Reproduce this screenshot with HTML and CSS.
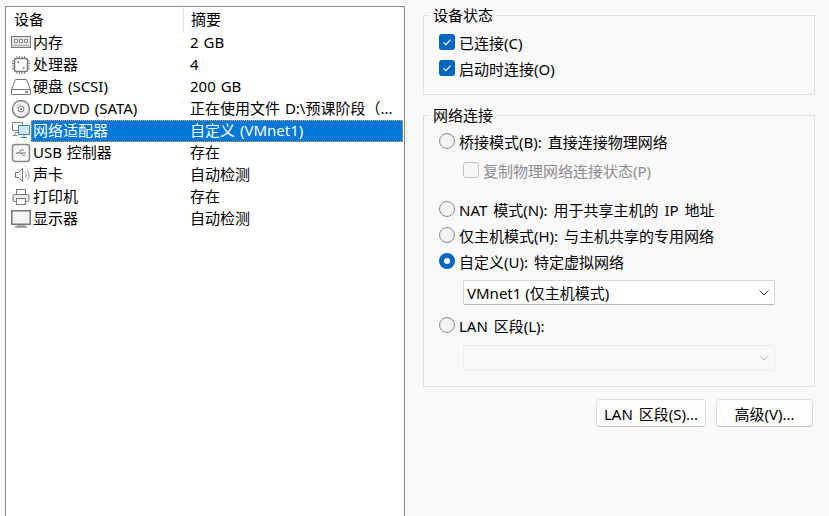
FILE: index.html
```html
<!DOCTYPE html>
<html lang="zh-CN">
<head>
    <meta charset="UTF-8">
    <title>网络适配器</title>
    <link rel="stylesheet" href="styles.css">
</head>
<body>
    <div class="device-list">
        <div class="list-head">
            <div class="head-name">设备</div>
            <div class="head-value">摘要</div>
        </div>
        <div class="row">
            <svg class="icon" viewBox="0 0 20 20"><rect x="0.500" y="3.500" width="19" height="11" fill="#e4e4e4" stroke="#777"/><path d="M3.500 6.500h3v3h-3zM8.500 6.500h3v3h-3zM13.500 6.500h3v3h-3z" fill="#fff" stroke="#888"/><path d="M2 12.500h16" stroke="#aaa"/></svg>
            <div class="label"><span class="name">内存</span><span>2 GB</span></div>
        </div>
        <div class="row">
            <svg class="icon" viewBox="0 0 20 20"><rect x="3.500" y="3.500" width="13" height="13" rx="1.500" fill="#fff" stroke="#777" stroke-width="1.500"/><path d="M6 1v2M8.500 1v2M11 1v2M13.500 1v2M6 17v2M8.500 17v2M11 17v2M13.500 17v2M1 6h2M1 8.500h2M1 11h2M1 13.500h2M17 6h2M17 8.500h2M17 11h2M17 13.500h2" stroke="#888"/><path d="M6.500 6.500h1.500v1.500H6.500zM12 12h1.500v1.500H12z" fill="#666"/></svg>
            <div class="label"><span class="name">处理器</span><span>4</span></div>
        </div>
        <div class="row">
            <svg class="icon" viewBox="0 0 20 20"><path d="M4.500 2.500h11l4 10v5h-19v-5z" fill="#fff" stroke="#777"/><path d="M0.500 12.500h19" stroke="#777"/><path d="M14 15h3" stroke="#666" stroke-width="1.500"/></svg>
            <div class="label"><span class="name">硬盘 (SCSI)</span><span>200 GB</span></div>
        </div>
        <div class="row">
            <svg class="icon" viewBox="0 0 20 20"><circle cx="10" cy="10" r="8.500" fill="#f4f4f4" stroke="#777" stroke-width="1.300"/><circle cx="10" cy="10" r="3" fill="#fff" stroke="#777"/><circle cx="10" cy="10" r="1" fill="#777"/><path d="M5 9a5 5 0 0 1 4-4" fill="none" stroke="#bbb"/></svg>
            <div class="label"><span class="name">CD/DVD (SATA)</span><span>正在使用文件 D:\预课阶段（...</span></div>
        </div>
        <div class="row">
            <svg class="icon" viewBox="0 0 20 20"><rect x="1.500" y="1.500" width="10" height="8" fill="#fff" stroke="#888"/><path d="M4 11.500h5M1.500 14.500h5M4 12v2" stroke="#888"/><rect x="7.500" y="4.500" width="11" height="9" fill="#cfe6f7" stroke="#3f86bd"/><path d="M10 16.500h6M13 14v2" stroke="#3f86bd"/></svg>
            <div class="label selected"><span class="name">网络适配器</span><span>自定义 (VMnet1)</span></div>
        </div>
        <div class="row">
            <svg class="icon" viewBox="0 0 20 20"><rect x="1.500" y="1.500" width="17" height="17" rx="3" fill="#f6f6f6" stroke="#888" stroke-width="1.500"/><path d="M5 10h10M7.500 10l2.500-3h3M10 10l2 2.500h2" fill="none" stroke="#777"/></svg>
            <div class="label"><span class="name">USB 控制器</span><span>存在</span></div>
        </div>
        <div class="row">
            <svg class="icon" viewBox="0 0 20 20"><path d="M4.500 7.500h3l4-4v13l-4-4h-3z" fill="#f2f2f2" stroke="#777"/><path d="M14 7a4 4 0 0 1 0 6M16 5a7 7 0 0 1 0 10" fill="none" stroke="#999"/></svg>
            <div class="label"><span class="name">声卡</span><span>自动检测</span></div>
        </div>
        <div class="row">
            <svg class="icon" viewBox="0 0 20 20"><path d="M5.500 7.500v-5h9v5" fill="#fff" stroke="#777"/><rect x="2" y="7.500" width="16" height="7" rx="1.500" fill="#eee" stroke="#777"/><rect x="5.500" y="11.500" width="9" height="6" fill="#fff" stroke="#777"/></svg>
            <div class="label"><span class="name">打印机</span><span>存在</span></div>
        </div>
        <div class="row">
            <svg class="icon" viewBox="0 0 20 20"><rect x="0.750" y="1.750" width="18.500" height="13.500" fill="#f4f4f4" stroke="#777" stroke-width="1.500"/><path d="M6 16h8v1.500H6z" fill="#aaa"/><path d="M4 18h12" stroke="#888" stroke-width="1.500"/></svg>
            <div class="label"><span class="name">显示器</span><span>自动检测</span></div>
        </div>
    </div>

    <div class="panel">
        <fieldset class="group status-group">
            <legend>设备状态</legend>
            <div class="option">
                <span class="box checked"><svg viewBox="0 0 16 16"><path d="M4.500 8.300l2.400 2.300 4.600-5" fill="none" stroke="#fff" stroke-width="1.100"/></svg></span>
                <span>已连接(C)</span>
            </div>
            <div class="option">
                <span class="box checked"><svg viewBox="0 0 16 16"><path d="M4.500 8.300l2.400 2.300 4.600-5" fill="none" stroke="#fff" stroke-width="1.100"/></svg></span>
                <span>启动时连接(O)</span>
            </div>
        </fieldset>

        <fieldset class="group network-group">
            <legend>网络连接</legend>
            <div class="option">
                <span class="radio"></span>
                <span>桥接模式(B): 直接连接物理网络</span>
            </div>
            <div class="option sub disabled">
                <span class="box"></span>
                <span>复制物理网络连接状态(P)</span>
            </div>
            <div class="option gap-top">
                <span class="radio"></span>
                <span>NAT 模式(N): 用于共享主机的 IP 地址</span>
            </div>
            <div class="option">
                <span class="radio"></span>
                <span>仅主机模式(H): 与主机共享的专用网络</span>
            </div>
            <div class="option">
                <span class="radio on"></span>
                <span>自定义(U): 特定虚拟网络</span>
            </div>
            <div class="select">
                <span>VMnet1 (仅主机模式)</span>
                <svg viewBox="0 0 10 6"><path d="M0.500 0.500L5 5l4.500-4.500" fill="none" stroke="#444"/></svg>
            </div>
            <div class="option lan-row">
                <span class="radio"></span>
                <span>LAN 区段(L):</span>
            </div>
            <div class="select select-off">
                <span></span>
                <svg viewBox="0 0 10 6"><path d="M0.500 0.500L5 5l4.500-4.500" fill="none" stroke="#bbb"/></svg>
            </div>
        </fieldset>

        <div class="buttons">
            <button class="btn btn-lan">LAN 区段(S)...</button>
            <button class="btn btn-adv">高级(V)...</button>
        </div>
    </div>
</body>
</html>
```

FILE: styles.css
```css
body {
    margin: 0;
    height: 516px;
    overflow: hidden;
    display: flex;
    background: #f9f9f9;
    color: #000;
    font-family: "Noto Sans", "Noto Sans CJK SC", sans-serif;
    font-size: 15px;
}
.device-list {
    box-sizing: border-box;
    width: 400px;
    height: 510px;
    margin: 6px 0 0 5px;
    background: #fff;
    border: 1px solid #868a91;
    border-bottom: none;
    word-spacing: 1px;
}
.list-head {
    display: flex;
    height: 25px;
    line-height: 24px;
}
.head-name {
    box-sizing: border-box;
    width: 178px;
    padding-left: 8px;
    border-right: 1px solid #e5e5e5;
}
.head-value {
    padding-left: 7px;
}
.row {
    display: flex;
    align-items: center;
    height: 22px;
    padding-left: 5px;
}
.icon {
    flex: none;
    width: 20px;
    height: 20px;
}
.label {
    flex: 1;
    display: flex;
    height: 22px;
    line-height: 21px;
    padding-left: 2px;
    white-space: nowrap;
    margin-right: 1px;
}
.name {
    width: 157px;
}
.selected {
    box-sizing: border-box;
    background: #0078d7;
    color: #fff;
    outline: 1px dotted #e8a05a;
    outline-offset: -1px;
}

.panel {
    width: 392px;
    margin-left: 18px;
    word-spacing: 2px;
}
.group {
    margin: 0;
    padding: 0 0 0 15px;
    border: 1px solid #e0e0e0;
    box-sizing: border-box;
}
.group legend {
    margin-left: -9px;
    padding: 0 3px;
    line-height: 20px;
}
.status-group {
    height: 90px;
    margin-top: 5px;
}
.network-group {
    height: 282px;
    margin-top: 10px;
}
.option {
    display: flex;
    align-items: center;
    gap: 4px;
    height: 26px;
}
.status-group .option:first-of-type {
    margin-top: 4px;
}
.network-group .option:first-of-type {
    margin-top: 3px;
}
.sub {
    margin: 3px 0 0 24px;
}
.gap-top {
    margin-top: 13px;
}
.lan-row {
    margin-top: 7px;
}
.disabled {
    color: #8c8c8c;
}
.box {
    box-sizing: border-box;
    flex: none;
    width: 16px;
    height: 16px;
    border: 1px solid #c4c4c4;
    border-radius: 3px;
    background: #f6f6f6;
}
.box svg {
    display: block;
    width: 16px;
    height: 16px;
}
.checked {
    background: #0067c0;
    border: none;
}
.radio {
    box-sizing: border-box;
    flex: none;
    width: 16px;
    height: 16px;
    border: 1px solid #8a8a8a;
    border-radius: 50%;
    background: #f3f3f3;
}
.radio.on {
    border: 5px solid #0067c0;
    background: #fff;
}
.select {
    box-sizing: border-box;
    display: flex;
    align-items: center;
    justify-content: space-between;
    width: 312px;
    height: 25px;
    margin: 6px 0 0 24px;
    padding: 0 5px 0 3px;
    background: #fff;
    border: 1px solid #d6d6d6;
    border-bottom-color: #b4b4b4;
    border-radius: 2px;
    word-spacing: 0;
}
.select svg {
    width: 10px;
    height: 6px;
}
.select-off {
    height: 26px;
    margin-top: 7px;
    background: #f9f9f9;
    border-color: #ececec;
}
.buttons {
    display: flex;
    justify-content: flex-end;
    gap: 10px;
    margin: 12px 2px 0 0;
}
.btn {
    box-sizing: border-box;
    height: 28px;
    padding: 0;
    background: #fdfdfd;
    border: 1px solid #dcdcdc;
    border-bottom-color: #c0c0c0;
    border-radius: 4px;
    color: #000;
    font: inherit;
    word-spacing: inherit;
}
.btn-lan {
    width: 110px;
}
.btn-adv {
    width: 97px;
}
```
